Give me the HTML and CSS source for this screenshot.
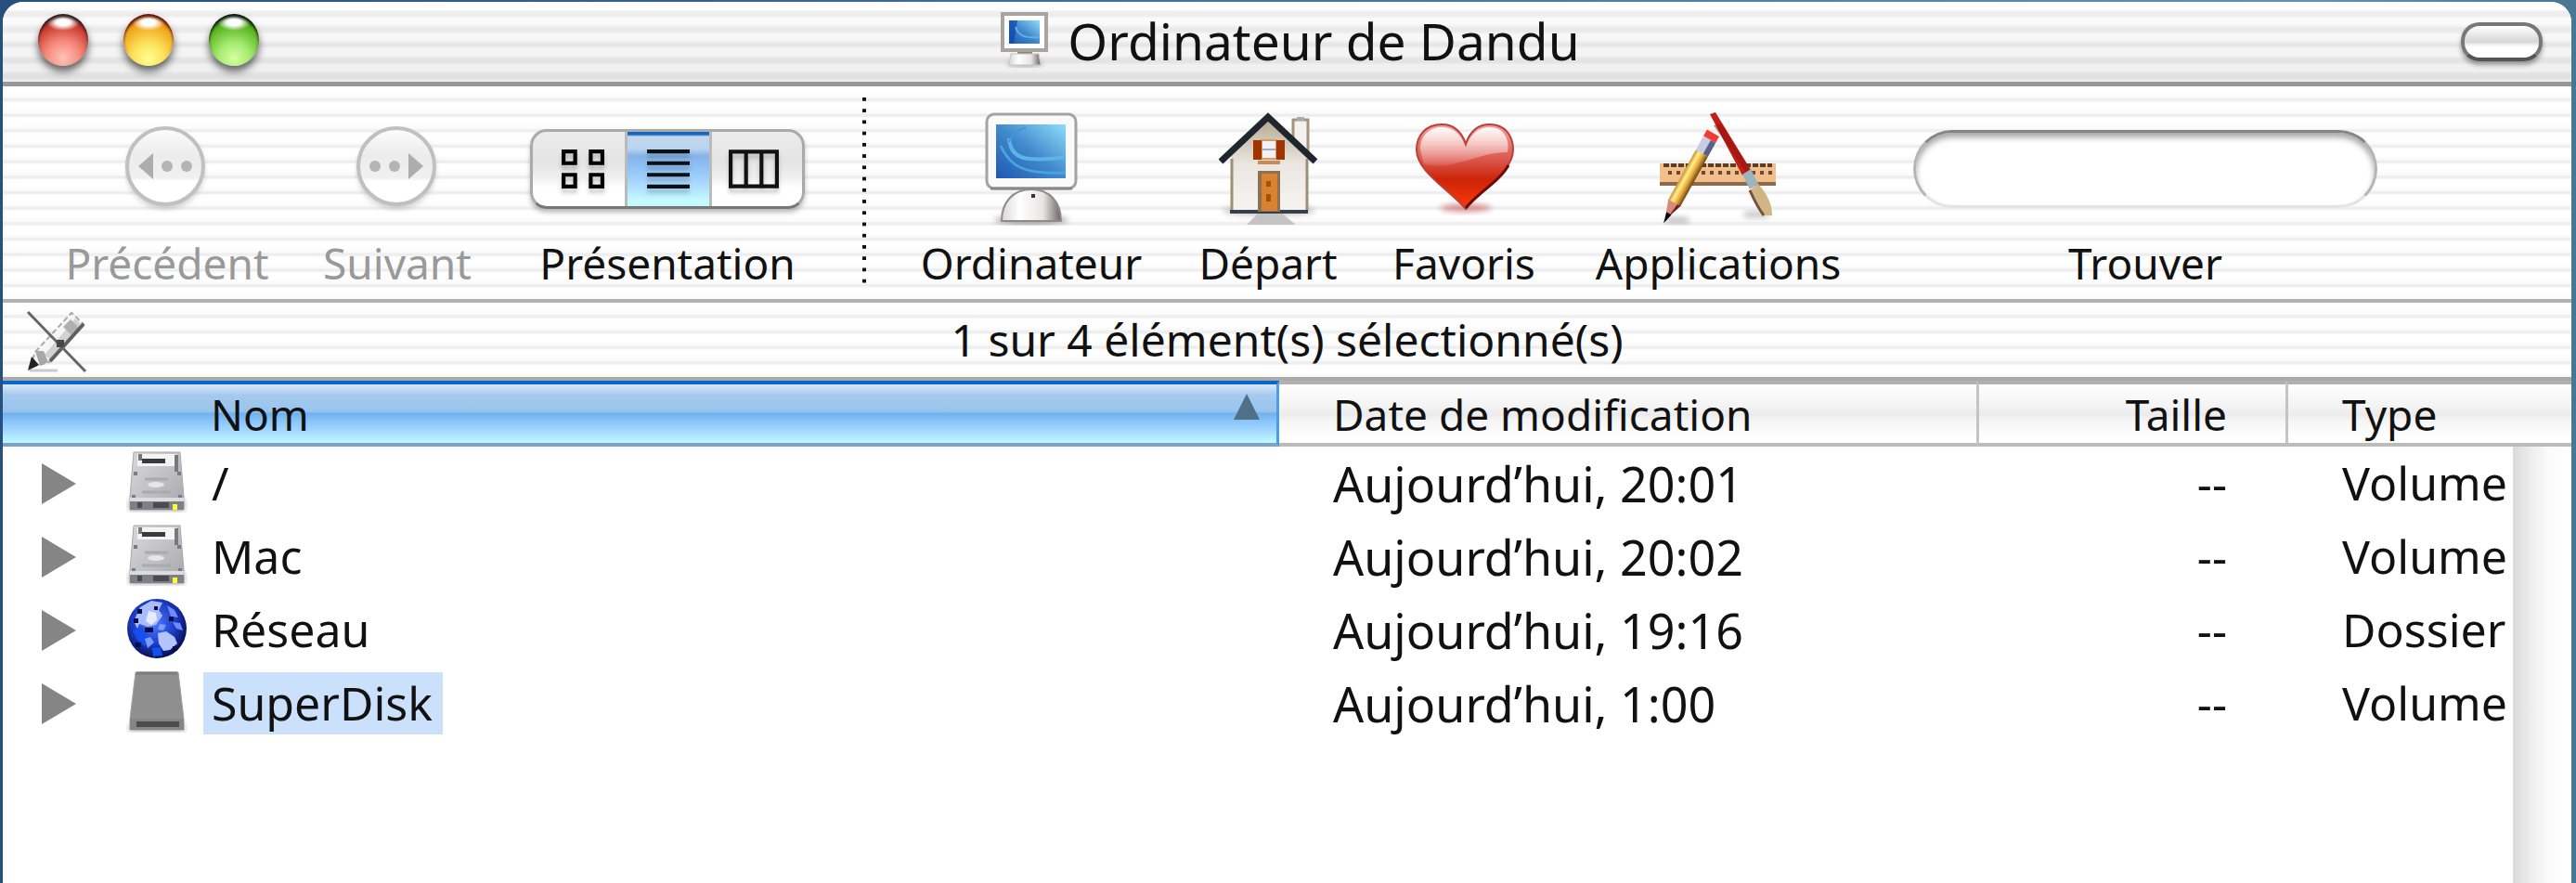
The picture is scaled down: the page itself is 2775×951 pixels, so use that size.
FILE: index.html
```
<!DOCTYPE html>
<html lang="fr">
<head>
  <meta charset="UTF-8">
  <title>Ordinateur de Dandu</title>
  <link rel="stylesheet" href="styles.css">
</head>
<body>

  <!-- shared gradients and icons -->
  <svg class="defs" width="0" height="0" aria-hidden="true">
    <defs>
      <linearGradient id="screen" x1="0" y1="1" x2="1" y2="0">
        <stop offset="0" stop-color="#1d58b4"/>
        <stop offset="0.5" stop-color="#4189cc"/>
        <stop offset="1" stop-color="#8fdcfa"/>
      </linearGradient>
      <linearGradient id="base" x1="0" y1="0" x2="1" y2="0">
        <stop offset="0" stop-color="#d8d8d8"/>
        <stop offset="0.3" stop-color="#ffffff"/>
        <stop offset="0.7" stop-color="#e8e4e4"/>
        <stop offset="1" stop-color="#6c6464"/>
      </linearGradient>
      <linearGradient id="metal" x1="0" y1="0" x2="1" y2="1">
        <stop offset="0" stop-color="#d8d8da"/>
        <stop offset="0.5" stop-color="#c2c2c6"/>
        <stop offset="1" stop-color="#a4a4aa"/>
      </linearGradient>
      <linearGradient id="wall" x1="0" y1="0" x2="0" y2="1">
        <stop offset="0" stop-color="#b3a78e"/>
        <stop offset="0.5" stop-color="#ebe6e0"/>
        <stop offset="1" stop-color="#f6f4f2"/>
      </linearGradient>
      <linearGradient id="heart" x1="0" y1="0" x2="0" y2="1">
        <stop offset="0" stop-color="#f6a29c"/>
        <stop offset="0.4" stop-color="#dc5a50"/>
        <stop offset="0.65" stop-color="#cc2408"/>
        <stop offset="1" stop-color="#ff3a08"/>
      </linearGradient>
      <linearGradient id="gloss" x1="0" y1="0" x2="0" y2="1">
        <stop offset="0" stop-color="#fff" stop-opacity="0.95"/>
        <stop offset="1" stop-color="#fff" stop-opacity="0.1"/>
      </linearGradient>
      <linearGradient id="pencil" x1="0" y1="0" x2="1" y2="0">
        <stop offset="0" stop-color="#c89030"/>
        <stop offset="0.3" stop-color="#fff08a"/>
        <stop offset="0.6" stop-color="#eeb040"/>
        <stop offset="1" stop-color="#6a4410"/>
      </linearGradient>
      <linearGradient id="nav" x1="0" y1="0" x2="0" y2="1">
        <stop offset="0" stop-color="#fdfdfd"/>
        <stop offset="0.35" stop-color="#ececec"/>
        <stop offset="0.65" stop-color="#f0f0f0"/>
        <stop offset="0.7" stop-color="#ffffff"/>
      </linearGradient>
      <radialGradient id="globe" cx="0.45" cy="0.4" r="0.6">
        <stop offset="0" stop-color="#4f7dff"/>
        <stop offset="0.6" stop-color="#1c3cc8"/>
        <stop offset="1" stop-color="#060f50"/>
      </radialGradient>
      <filter id="soft" x="-20%" y="-100%" width="140%" height="300%">
        <feGaussianBlur stdDeviation="3"/>
      </filter>
    </defs>
    <symbol id="disk" viewBox="0 0 66 66">
      <rect x="3" y="52" width="60" height="12" fill="#000" opacity="0.3" filter="url(#soft)"/>
      <path d="M8 1h50l4 48v14H4V49z" fill="url(#metal)" stroke="#a8a8ac"/>
      <path d="M12 3h42v13H12z" fill="#f4f4f4"/>
      <path d="M17 8h25v5H17z" fill="#3a3a3c"/>
      <path d="M13 3h4v7h-4zM52 4h4v18h-4z" fill="#77777c"/>
      <path d="M8 22h4v4H8zM55 22h4v4h-4zM6 47h4v4H6zM56 47h4v4h-4z" fill="#7b7b82"/>
      <path d="M20 30h25M17 44h31" stroke="#a9a9ae" stroke-width="3"/>
      <ellipse cx="32" cy="36" rx="9" ry="3" fill="#e6e6e8"/>
      <path d="M4 50h58v4H4z" fill="#dcdce0"/>
      <path d="M4 54h58v9H4z" fill="#7f7f88"/>
      <path d="M12 55h5v6h-5zM29 55h17v6H29z" fill="#4a4a52"/>
      <path d="M50 57h5v6h-5z" fill="#ffff30"/>
    </symbol>
  </svg>

  <div class="window">
    <header class="titlebar">
      <div class="lights">
        <button class="light red" aria-label="Fermer"></button>
        <button class="light yellow" aria-label="Réduire"></button>
        <button class="light green" aria-label="Agrandir"></button>
      </div>
      <h1 class="title">
        <svg width="52" height="60" viewBox="0 0 52 60">
          <ellipse cx="26" cy="56" rx="20" ry="3" opacity="0.3" filter="url(#soft)"/>
          <path d="M18 40h16v6H18z" fill="#8a8580"/>
          <path d="M11 45h30l2 12H9z" fill="url(#base)" stroke="#c8c4c0"/>
          <rect x="2" y="2" width="47" height="39" fill="#fff" stroke="#a8a49f" stroke-width="4"/>
          <rect x="9" y="9" width="33" height="25" fill="url(#screen)"/>
          <path d="M9 9h9l-4 25H9z" fill="#0c46b0" opacity="0.7"/>
          <path d="M16 16c3 10 10 12 25 11" fill="none" stroke="#62b0e6" stroke-width="2"/>
        </svg>
        Ordinateur de Dandu
      </h1>
      <button class="pill" aria-label="Masquer la barre d’outils"></button>
    </header>

    <div class="pinstripe">
      <nav class="toolbar">
        <button class="item back" disabled>
          <span class="icon">
            <svg width="92" height="94" viewBox="0 0 92 94">
              <circle cx="44" cy="48" r="42" opacity="0.2" filter="url(#soft)"/>
              <circle cx="44" cy="44" r="41" fill="url(#nav)" stroke="#c0c0c0" stroke-width="4"/>
              <path d="M15 44l16-14v28z" fill="#adadad"/>
              <circle cx="46" cy="44" r="6" fill="#b4b4b4"/>
              <circle cx="67" cy="44" r="6" fill="#b4b4b4"/>
            </svg>
          </span>
          <span class="label">Précédent</span>
        </button>
        <button class="item next" disabled>
          <span class="icon">
            <svg width="92" height="94" viewBox="0 0 92 94">
              <circle cx="45" cy="48" r="42" opacity="0.2" filter="url(#soft)"/>
              <circle cx="45" cy="44" r="41" fill="url(#nav)" stroke="#c0c0c0" stroke-width="4"/>
              <path d="M74 44L58 30v28z" fill="#adadad"/>
              <circle cx="43" cy="44" r="6" fill="#b4b4b4"/>
              <circle cx="22" cy="44" r="6" fill="#b4b4b4"/>
            </svg>
          </span>
          <span class="label">Suivant</span>
        </button>

        <div class="item view" role="group" aria-labelledby="view-label">
          <span class="icon">
            <span class="segments">
              <button aria-label="Icônes">
                <svg width="46" height="42" viewBox="0 0 11 10" fill="none" stroke="#000">
                  <path d="M.5.5h3v3h-3zM7.500.5h3v3h-3zM.5 6.500h3v3h-3zM7.500 6.500h3v3h-3z"/>
                </svg>
              </button>
              <button class="on" aria-label="Liste">
                <svg width="46" height="42" viewBox="0 0 11 10" fill="none" stroke="#0a1018">
                  <path d="M0 .5h11M0 3.500h11M0 6.500h11M0 9.500h11"/>
                </svg>
              </button>
              <button aria-label="Colonnes">
                <svg width="54" height="42" viewBox="0 0 13 10" fill="none" stroke="#111">
                  <path d="M.5.5h12v9H.5zM4.500 0v10M8.500 0v10"/>
                </svg>
              </button>
            </span>
          </span>
          <span class="label" id="view-label">Présentation</span>
        </div>

        <div class="separator"></div>

        <button class="item computer">
          <span class="icon">
            <svg width="100" height="122" viewBox="0 0 100 122">
              <ellipse cx="50" cy="116" rx="40" ry="4" opacity="0.4" filter="url(#soft)"/>
              <path d="M18 117c0-20 12-34 32-34s32 14 32 34z" fill="url(#base)" stroke="#8f8b8b" stroke-width="2"/>
              <rect x="2" y="2" width="96" height="80" rx="8" fill="#fafafa" stroke="#a3a3a3" stroke-width="3"/>
              <path d="M6 82h88" stroke="#888" stroke-width="3"/>
              <rect x="12" y="13" width="75" height="58" fill="url(#screen)"/>
              <path d="M26 28c1 14 8 21 22 22s28 0 39-2" fill="none" stroke="#5ab4e4" stroke-width="4"/>
              <path d="M17 36c10 22 24 31 70 29" fill="none" stroke="#4aa4dc" stroke-width="3"/>
              <path d="M44 16c-10 4-16 8-18 16" fill="none" stroke="#4a92d4" stroke-width="2"/>
              <rect x="50" y="88" width="4" height="4" fill="#333"/>
            </svg>
          </span>
          <span class="label">Ordinateur</span>
        </button>
        <button class="item home">
          <span class="icon">
            <svg width="106" height="122" viewBox="0 0 106 122">
              <ellipse cx="54" cy="106" rx="50" ry="5" opacity="0.25" filter="url(#soft)"/>
              <path d="M42 109h26l15 12H30z" fill="#c4c4c4"/>
              <path d="M80 8h16v40L80 32z" fill="#f4f2ee" stroke="#a3957b" stroke-width="3"/>
              <path d="M84 5h8v4h-8z" fill="#aaa"/>
              <path d="M53 6l43 40v60H13V46z" fill="url(#wall)"/>
              <path d="M14 50v56M95 50v56" stroke="#9c9078" stroke-width="3"/>
              <path d="M12 107h84" stroke="#36404c" stroke-width="4"/>
              <path d="M2 53L53 5l51 48" fill="none" stroke="#20262e" stroke-width="7"/>
              <path d="M46 30h16v20H46z" fill="#f2f2f6" stroke="#d89a64" stroke-width="2"/>
              <path d="M47 40h14" stroke="#aab" stroke-width="2"/>
              <path d="M37 30h9v21h-9zM62 30h9v21h-9z" fill="#a03400"/>
              <path d="M42 52h24v4H42z" fill="#c98a5a"/>
              <path d="M42 63h24v44H42z" fill="#8c7250"/>
              <path d="M46 66h17v40H46z" fill="#d9822f"/>
              <path d="M51 74h5v6h-5zM51 88h5v8h-5z" fill="#a54e10"/>
            </svg>
          </span>
          <span class="label">Départ</span>
        </button>
        <button class="item favorites">
          <span class="icon">
            <svg width="110" height="100" viewBox="0 0 110 100">
              <ellipse cx="57" cy="92" rx="28" ry="4" fill="#a00" opacity="0.45" filter="url(#soft)"/>
              <path d="M57 23C52 8 42 2 31 2 14 2 4 14 4 29c0 24 34 42 53 64 18-22 51-40 51-64C108 14 99 2 83 2 72 2 62 8 57 23z" fill="url(#heart)" stroke="#b8403a" stroke-width="2"/>
              <path d="M103 46C93 64 68 77 57 92" fill="none" stroke="#6c0a04" stroke-width="3"/>
              <path d="M57 27C52 11 42 5 31 5 17 5 8 15 8 29l4 16c30 8 60-14 90-13 3-15-5-27-19-27C72 5 62 11 57 27z" fill="url(#gloss)"/>
            </svg>
          </span>
          <span class="label">Favoris</span>
        </button>
        <button class="item apps">
          <span class="icon">
            <svg width="128" height="122" viewBox="0 0 128 122">
              <path d="M8 116h24M92 110h26" stroke="#000" stroke-width="5" opacity="0.3" filter="url(#soft)"/>
              <path d="M1 55h125v24H1z" fill="#f2bf8c"/>
              <path d="M1 77h125" stroke="#8e6a4a" stroke-width="4"/>
              <path d="M5 57h117" stroke="#5a3f28" stroke-width="4" stroke-dasharray="6 2"/>
              <path d="M10 65h112" stroke="#6a4c34" stroke-width="4" stroke-dasharray="4 5"/>
              <g transform="rotate(29 58 22)">
                <path d="M51 22h15v8H51z" fill="#f03c34"/>
                <path d="M51 30h15v17H51z" fill="#c9cce4"/>
                <path d="M60 30h6v17h-6z" fill="#5a6288"/>
                <path d="M51 47h15v62H51z" fill="url(#pencil)"/>
                <path d="M51 108h15l-6 17h-3z" fill="#d88a78"/>
                <path d="M62 108h4l-6 17z" fill="#6b1f1a"/>
                <path d="M56 121h6l-3 12z" fill="#000"/>
              </g>
              <path d="M55 2l6-2 38 62-9 6z" fill="#c02018"/>
              <path d="M59 14l8-2 32 50-5 3z" fill="#8f100c" opacity="0.5"/>
              <path d="M90 67l9-6 8 16-9 6z" fill="#9cb4be"/>
              <path d="M98 84l9-7c8 9 15 20 15 34h-9c-5-7-11-17-15-27z" fill="#d0b684"/>
              <path d="M98 84c4 9 9 19 15 27" fill="none" stroke="#7a4f3c" stroke-width="3"/>
            </svg>
          </span>
          <span class="label">Applications</span>
        </button>

        <div class="item search">
          <span class="icon"><input type="text" id="find"></span>
          <label class="label" for="find">Trouver</label>
        </div>
      </nav>

      <div class="status">
        <svg class="readonly" width="68" height="68" viewBox="0 0 68 68">
          <path d="M4 65h30" stroke="#000" stroke-width="3" opacity="0.2"/>
          <path d="M4 62l6-17L49 3l13 12L25 56z" fill="#f6f6f6" stroke="#aaa" stroke-width="2" stroke-dasharray="6 3"/>
          <path d="M53 9l7 7-33 38-7-6z" fill="#d2d2d2"/>
          <path d="M40 18l8-8 9 9-8 8z" fill="#b0b0b0"/>
          <path d="M62 15L26 55" stroke="#606060" stroke-width="4"/>
          <path d="M10 44l9 0 5 12-9 4z" fill="#a8a8a8"/>
          <path d="M2 65l4-15 8 9z" fill="#222"/>
          <path d="M2 2l62 64" stroke="#666" stroke-width="3"/>
          <path d="M33 32h8v8h-8z" fill="#484848"/>
        </svg>
        1 sur 4 élément(s) sélectionné(s)
      </div>
    </div>

    <main class="list">
      <table>
        <thead>
          <tr>
            <th class="name sorted" aria-sort="ascending"><button>Nom <span class="arrow"></span></button></th>
            <th class="date">Date de modification</th>
            <th class="size">Taille</th>
            <th class="type">Type</th>
          </tr>
        </thead>
        <tbody>
          <tr>
            <td><div class="file"><button class="expand" aria-label="Ouvrir"></button><svg width="66" height="66"><use href="#disk"/></svg><span>/</span></div></td>
            <td class="date">Aujourd’hui, 20:01</td>
            <td class="size">--</td>
            <td class="type">Volume</td>
          </tr>
          <tr>
            <td><div class="file"><button class="expand" aria-label="Ouvrir"></button><svg width="66" height="66"><use href="#disk"/></svg><span>Mac</span></div></td>
            <td class="date">Aujourd’hui, 20:02</td>
            <td class="size">--</td>
            <td class="type">Volume</td>
          </tr>
          <tr>
            <td>
              <div class="file">
                <button class="expand" aria-label="Ouvrir"></button>
                <svg width="66" height="66" viewBox="0 0 66 66">
                  <circle cx="33" cy="33" r="32" fill="url(#globe)"/>
                  <path d="M15 10l12-7 12 2-4 8 4 6-7 10-9 2-9-3-2 5-4-8z" fill="#a8bcff"/>
                  <path d="M24 14l8 2 1 8-6 5-6-4z" fill="#e6ecff"/>
                  <path d="M44 8l8 5 4 8-8-1zM50 26l8 1 3 8-7-2z" fill="#6d8cff"/>
                  <path d="M34 38l9-2 9 6 3 7-8 7-7 1-5-8z" fill="#b4c4ff"/>
                  <path d="M8 22h5v5H8zM12 12h5v5h-5zM20 32h9v5h-9zM46 20h5v5h-5zM10 48h6v5h-6zM50 52h5v5h-5zM30 9h4v4h-4z" fill="#050c48"/>
                  <path d="M7 36l10-4 8 12-5 8-8-7zM28 54l9-1 2 9-10 1z" fill="#1450f0"/>
                  <path d="M20 44l6-2 4 6-7 6zM36 28l7 1-3 6-6-1z" fill="#7c9cff"/>
                </svg>
                <span>Réseau</span>
              </div>
            </td>
            <td class="date">Aujourd’hui, 19:16</td>
            <td class="size">--</td>
            <td class="type">Dossier</td>
          </tr>
          <tr>
            <td>
              <div class="file">
                <button class="expand" aria-label="Ouvrir"></button>
                <svg width="66" height="66" viewBox="0 0 66 66">
                  <path d="M3 58h60v6H3z" opacity="0.35" filter="url(#soft)"/>
                  <path d="M10 1h46l6 50v12H4V51z" fill="#8f8f8f" stroke="#a2a2a2"/>
                  <path d="M11 2h44" stroke="#7c7c7c" stroke-width="3"/>
                  <path d="M4 51h58v12H4z" fill="#858585"/>
                  <path d="M11 54h46v6H11z" fill="#4c4c4c"/>
                </svg>
                <span class="selected">SuperDisk</span>
              </div>
            </td>
            <td class="date">Aujourd’hui, 1:00</td>
            <td class="size">--</td>
            <td class="type">Volume</td>
          </tr>
        </tbody>
      </table>
    </main>
  </div>

</body>
</html>
```
FILE: styles.css
```
* {
  box-sizing: border-box;
}
body {
  margin: 0;
  min-height: 100vh;
  display: flex;
  flex-direction: column;
  padding: 2px 5px 0 3px;
  background: linear-gradient(to right, #28507f, #5b94b6 90%, #467894);
  font-family: "Noto Sans", "Open Sans", sans-serif;
  font-size: 46px;
  color: #111;
}
button {
  border: 0;
  padding: 0;
  background: none;
  font: inherit;
  color: inherit;
}
svg {
  display: block;
  flex: none;
}
.defs {
  position: absolute;
}
.window {
  flex: 1;
  display: flex;
  flex-direction: column;
  border-radius: 22px 22px 0 0;
  background: #fff;
  overflow: hidden;
}

/* title bar */
.titlebar {
  display: grid;
  grid-template-columns: 1fr auto 1fr;
  align-items: center;
  height: 91px;
  padding: 0 31px 4px 38px;
  border-bottom: 5px solid #979797;
  background:
    linear-gradient(rgba(0, 0, 0, 0), rgba(0, 0, 0, 0.07)),
    repeating-linear-gradient(#fff 0, #fff 8px, #f0f0f0 11px, #f0f0f0 15px, #fff 18px,
      #fff 24px, #f0f0f0 28px, #f0f0f0 32px, #fff 35px,
      #fff 41px, #f0f0f0 45px, #f0f0f0 48px, #fff 50px);
}
.lights {
  display: flex;
  gap: 38px;
}
.light {
  width: 54px;
  height: 56px;
  border-radius: 50%;
}
.red {
  background:
    radial-gradient(ellipse 18px 9px at 50% 9px, #fff 40%, rgba(255, 255, 255, 0) 100%),
    radial-gradient(circle at 50% 85%, #ffc4b8 0, #f4877a 35%, #c8382c 68%, #6d1410 85%, #333 100%);
  box-shadow: 0 6px 8px rgba(0, 0, 0, 0.6), inset 0 3px 3px #222;
}
.yellow {
  background:
    radial-gradient(ellipse 18px 9px at 50% 9px, #fff 40%, rgba(255, 255, 255, 0) 100%),
    radial-gradient(circle at 50% 85%, #ffff90 0, #fce25c 30%, #eea01c 68%, #ae4a0c 85%, #501000 100%);
  box-shadow: 0 6px 8px rgba(0, 0, 0, 0.6), inset 0 3px 3px #5a1008;
}
.green {
  background:
    radial-gradient(ellipse 18px 9px at 50% 9px, #fff 40%, rgba(255, 255, 255, 0) 100%),
    radial-gradient(circle at 50% 85%, #d8ffa0 0, #a4ec70 30%, #56b01c 68%, #146410 85%, #111 100%);
  box-shadow: 0 6px 8px rgba(0, 0, 0, 0.6), inset 0 3px 3px #111;
}
.title {
  display: flex;
  align-items: center;
  gap: 20px;
  margin: 0;
  font-size: 55px;
  font-weight: normal;
  white-space: nowrap;
}
.pill {
  justify-self: end;
  width: 88px;
  height: 42px;
  margin-top: 4px;
  border: 4px solid #777;
  border-bottom-color: #555;
  border-radius: 20px;
  background: linear-gradient(#fff, #d6d6d6 50%, #fff 65%);
  box-shadow: 0 4px 5px rgba(0, 0, 0, 0.35);
}

/* toolbar and status share one run of stripes */
.pinstripe {
  background: linear-gradient(#fff 40%, #fafafa 74%, #eee 80%, #eee 94%, #fafafa);
  background-size: 100% 17px;
  background-repeat: round;
}
.toolbar {
  display: flex;
  gap: 60px;
  height: 233px;
  padding: 28px 70px 0;
  border-bottom: 4px solid #b2b2b2;
}
.item {
  flex: none;
  display: flex;
  flex-direction: column;
  align-items: center;
}
.item:disabled {
  color: #999;
}
.icon {
  display: flex;
  align-items: center;
  justify-content: center;
  height: 122px;
}
.label {
  margin-top: 10px;
  line-height: 60px;
  white-space: nowrap;
}
.back {
  width: 214px;
}
.next {
  width: 162px;
}
.view {
  width: 300px;
}
.computer {
  width: 236px;
}
.home {
  width: 154px;
}
.favorites {
  width: 148px;
}
.apps {
  width: 280px;
}
.search {
  width: 520px;
}
.segments {
  display: flex;
  width: 296px;
  height: 86px;
  border: 3px solid #aaa;
  border-bottom-color: #777;
  border-radius: 18px;
  overflow: hidden;
  background: linear-gradient(#ececec, #e4e4e4 40%, #eee 60%, #fff 75%);
  box-shadow: 0 4px 5px rgba(0, 0, 0, 0.25);
}
.segments button {
  flex: 1;
  display: flex;
  align-items: center;
  justify-content: center;
}
.segments button:first-child {
  padding-left: 10px;
}
.segments button:last-child {
  padding-right: 8px;
}
.segments svg {
  filter: drop-shadow(0 5px 2px rgba(0, 0, 0, 0.2));
}
.segments .on {
  border-left: 3px solid #bbb;
  border-right: 3px solid #bbb;
  background: linear-gradient(#1668bc 3px, #c4d8f0 5px, #bcd4f0 18px, #84b4e6 26px, #98c8fc 44px, #b0e0ff 60px, #c4faff 74px);
}
.separator {
  width: 4px;
  height: 208px;
  margin-top: -16px;
  background: linear-gradient(#111 4px, transparent 4px);
  background-size: 4px 12px;
  background-repeat: round;
}
.search input {
  width: 500px;
  height: 84px;
  padding: 0 36px;
  border: 3px solid;
  border-color: #858585 #b4b4b4 #e4e4e4;
  border-radius: 42px;
  outline: 0;
  background: #fff;
  box-shadow: inset 0 5px 6px rgba(0, 0, 0, 0.35);
  font: inherit;
}
.status {
  position: relative;
  height: 84px;
  border-bottom: 4px solid #aaa;
  font-size: 48px;
  line-height: 80px;
  text-align: center;
}
.readonly {
  position: absolute;
  left: 25px;
  top: 8px;
}

/* file list, with the empty scroller on its right */
.list {
  flex: 1;
  background: linear-gradient(to right, #dadada, #f0f0f0 35%, #fafafa 60%, #fff) right / 63px 100% no-repeat #fff;
}
table {
  width: 100%;
  table-layout: fixed;
  border-collapse: separate;
  border-spacing: 0;
}
th {
  height: 71px;
  padding: 0;
  border-top: 4px solid #b0b0b0;
  border-bottom: 4px solid #bcbcbc;
  background: linear-gradient(#fff, #f2f2f2 40%, #ebebeb 52%, #f4f4f4 60%, #fff 90%);
  font-weight: normal;
  line-height: 62px;
  text-align: left;
}
td {
  height: 79px;
  padding: 0;
  font-size: 50px;
  line-height: 79px;
  white-space: nowrap;
}
th.sorted {
  border-top-color: #0a66cc;
  border-bottom-color: #76a4cc;
  border-right: 3px solid #4c9ee4;
  background: linear-gradient(#dce8f8, #a4caee 18%, #98c4ec 46%, #70b2ec 50%, #8cc6fa 64%, #a4d8ff 80%, #c0fcff);
}
.sorted button {
  display: flex;
  align-items: center;
  justify-content: space-between;
  width: 100%;
  padding: 0 18px 0 224px;
}
.arrow {
  margin-bottom: 16px;
  border: solid transparent;
  border-width: 0 14px 28px;
  border-bottom-color: #507088;
}
.date {
  width: 751px;
  padding-left: 58px;
}
td.date {
  font-size: 52px;
}
.size {
  width: 333px;
  padding-right: 63px;
  text-align: right;
}
.type {
  width: 308px;
  padding-left: 58px;
}
th.size,
th.type {
  border-left: 3px solid #c4c4c4;
}
td.type {
  padding-left: 61px;
}
.file {
  display: flex;
  align-items: center;
  height: 79px;
  padding-left: 42px;
}
.expand {
  border: solid transparent;
  border-width: 22px 0 22px 37px;
  border-left-color: #858585;
}
.file svg {
  margin-left: 54px;
  margin-bottom: 4px;
}
.file span {
  margin-left: 17px;
  padding: 0 11px 0 9px;
  line-height: 67px;
}
.selected {
  background: #cbe0fb;
}
```
